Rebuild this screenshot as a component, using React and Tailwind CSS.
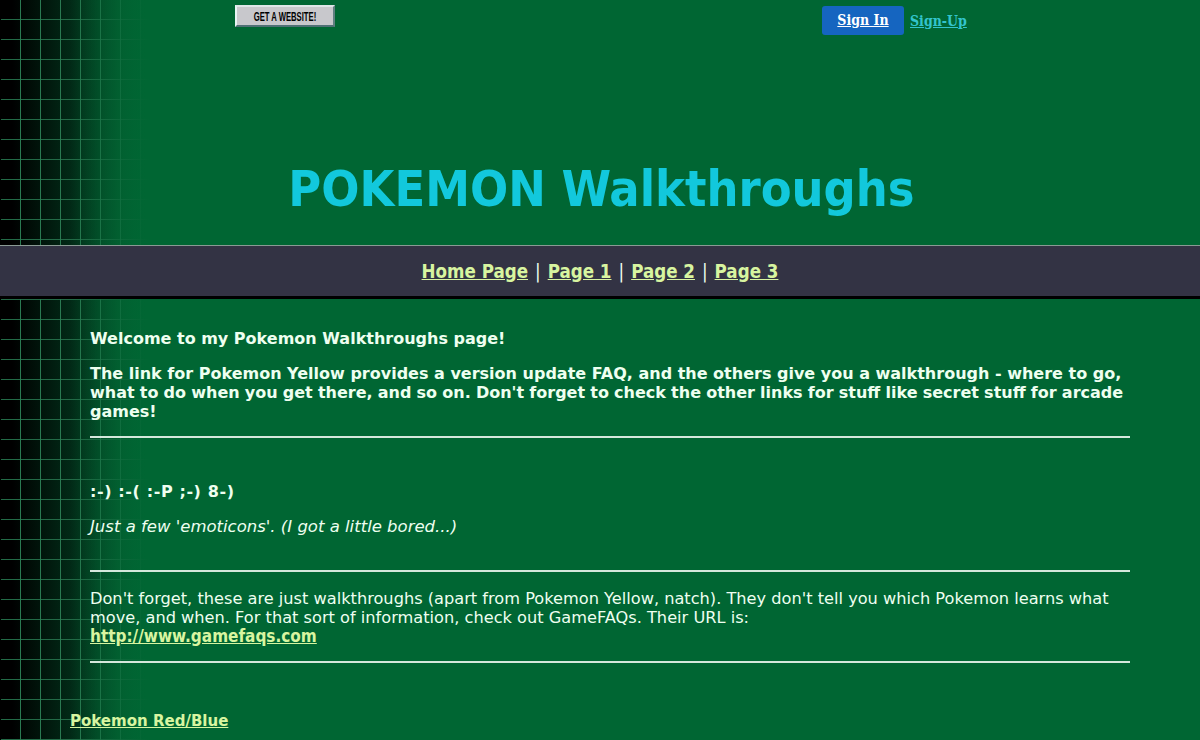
const bgClass =
  "bg-[linear-gradient(to_right,#000000_1px,transparent_1px,transparent_100%),linear-gradient(to_right,transparent_70px,#006633_150px),linear-gradient(to_right,#2a7a52_1px,transparent_1px),linear-gradient(to_bottom,#236b47_1px,transparent_1px),linear-gradient(to_right,#000000_12px,#02301a_80px,#04552c_120px,#006633_146px)] bg-[size:100%_100%,100%_100%,20px_20px,20px_20px,100%_100%] bg-[position:0_0,0_0,0_0,0_19px,0_0]";

const NavLink = ({ children }) => (
  <a href="#" className="font-bold text-[#d8f5a0] underline">
    {children}
  </a>
);

const Rule = ({ className }) => <hr className={`border-0 h-0.5 bg-[#d5e8dc] ${className}`} />;

export default function App() {
  return (
    <div className={`h-[740px] overflow-hidden bg-[#006633] text-[16px] leading-[19px] text-[#eefff0] font-['DejaVu_Sans',sans-serif] ${bgClass}`}>
      {/* Top bar */}
      <div className="h-[245px] flex flex-col">
        <div className="flex items-start h-[159px]">
          <a
            href="#"
            className="ml-[235px] mt-[5px] w-[100px] h-[22px] flex items-center justify-center bg-[#c8c8cc] border-2 border-t-[#dfe6e8] border-l-[#e8f4f4] border-r-[#5f7f80] border-b-[#4f7075]"
          >
            <span className="font-['Liberation_Sans',sans-serif] font-bold text-[13px] text-black scale-x-[0.59] whitespace-nowrap">GET A WEBSITE!</span>
          </a>
          <a href="#" className="ml-[487px] mt-[6px] w-[82px] h-[29px] flex items-center justify-center rounded-[3px] bg-[#1565c0] text-white font-bold text-[14px] underline font-['DejaVu_Serif_Condensed',serif]">
            Sign In
          </a>
          <a href="#" className="ml-[6px] mt-[12px] text-[#33c4cc] font-bold text-[14px] underline font-['DejaVu_Serif_Condensed',serif]">
            Sign-Up
          </a>
        </div>
        <h1 className="text-center text-[50px] leading-[60px] font-bold text-[#12c8dc] pl-[3px] font-['DejaVu_Sans_Condensed',sans-serif]">POKEMON Walkthroughs</h1>
      </div>

      {/* Nav */}
      <div className="h-[54px] flex items-center justify-center gap-[7px] bg-[#333344] border-t border-[#8a9a94] border-b-[3px] border-b-black text-[18.6px] font-['DejaVu_Sans_Condensed',sans-serif]">
        <NavLink>Home Page</NavLink>
        <span>|</span>
        <NavLink>Page 1</NavLink>
        <span>|</span>
        <NavLink>Page 2</NavLink>
        <span>|</span>
        <NavLink>Page 3</NavLink>
      </div>

      {/* Content */}
      <div className="pl-[90px] pr-[70px] pt-[30px]">
        <p className="font-bold">Welcome to my Pokemon Walkthroughs page!</p>
        <p className="font-bold mt-[16px] whitespace-nowrap">
          The link for Pokemon Yellow provides a version update FAQ, and the others give you a walkthrough - where to go,
          <br />
          <span className="[word-spacing:-0.4px]">what to do when you get there, and so on. Don't forget to check the other links for stuff like secret stuff for arcade</span>
          <br />
          games!
        </p>
        <Rule className="mt-[15px]" />
        <p className="font-bold mt-[44px] tracking-[0.6px]">:-) :-( :-P ;-) 8-)</p>
        <p className="italic mt-[16px] text-[16.5px]">Just a few 'emoticons'. (I got a little bored...)</p>
        <Rule className="mt-[34px]" />
        <p className="mt-[17px] text-[16.2px]">
          Don't forget, these are just walkthroughs (apart from Pokemon Yellow, natch). They don't tell you which Pokemon learns what move, and when. For that sort of information, check out GameFAQs. Their URL is:
          <br />
          <a href="#" className="font-bold text-[#d8f5a0] underline text-[17px] font-['DejaVu_Sans_Condensed',sans-serif]">http://www.gamefaqs.com</a>
        </p>
        <Rule className="mt-[15px]" />
      </div>
      <div className="pl-[70px] mt-[48px]">
        <a href="#" className="font-bold text-[#d8f5a0] underline text-[16.7px] font-['DejaVu_Sans_Condensed',sans-serif]">Pokemon Red/Blue</a>
      </div>
    </div>
  );
}
